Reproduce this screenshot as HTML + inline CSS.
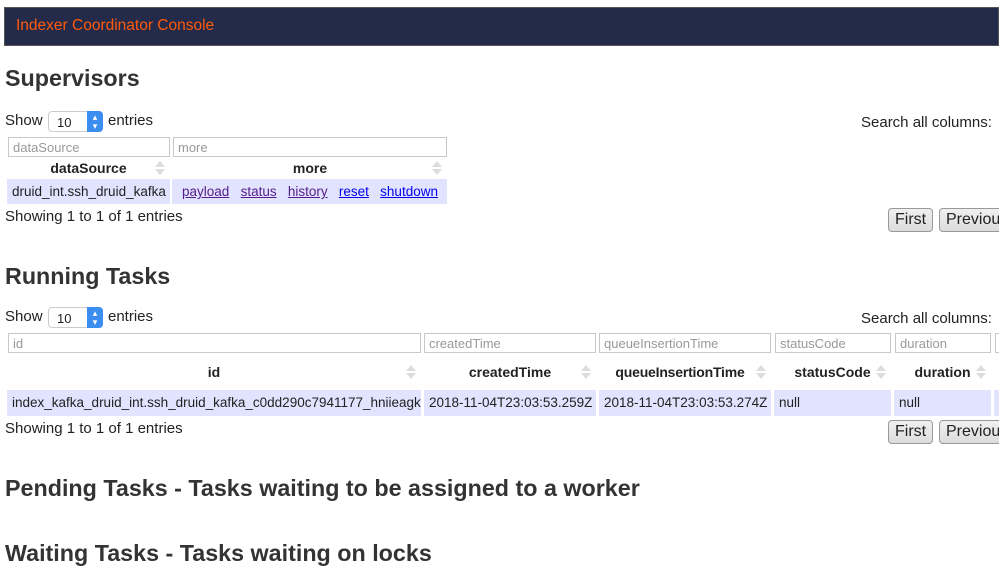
<!DOCTYPE html>
<html><head><meta charset="utf-8"><style>
*{box-sizing:border-box;margin:0;padding:0}
body{width:999px;height:580px;overflow:hidden;background:#fff;font-family:"Liberation Sans",Arial,sans-serif;color:#222;position:relative}
.a{position:absolute;white-space:nowrap}
.hdr{left:4px;top:7px;width:995px;height:39px;background:#232a4a;border:1px solid #555}
.ttl{left:16px;top:17px;font-size:15.5px;color:#ff5a0a}
h2{position:absolute;font-size:23.3px;font-weight:bold;color:#333;white-space:nowrap}
.t{font-size:15px}
.sel{width:55px;height:21px;border:1px solid #ccc;border-radius:4px;background:#fff;font-size:13px;padding:3px 0 0 8px}
.sel i{position:absolute;right:-1px;top:-1px;width:16px;height:21px;background:#3b8ef0;border-radius:0 4px 4px 0;color:#fff;font-style:normal;font-size:9px;text-align:center;line-height:9px;padding-top:2px}
.inp{height:20px;border:1px solid #c8c8c8;font-size:13px;color:#999;padding:2px 4px;background:#fff}
.th{font-size:14px;font-weight:bold;text-align:center}
.ar{position:absolute;width:0;height:0;border-left:5px solid transparent;border-right:5px solid transparent}
.up{border-bottom:6px solid #ddd}.dn{border-top:6px solid #ddd}
.cell{background:#e2e4ff;font-size:13.5px;padding:5px 5px 0;overflow:hidden}
.btn{height:24px;border:1px solid #999;border-radius:4px;background:linear-gradient(#f0f0f0,#dcdcdc);font-size:16px;padding:2px 6px}
a{color:#0000ee;text-decoration:underline}a.v{color:#551a8b}
</style></head><body>
<div class="a hdr"></div>
<div class="a ttl">Indexer Coordinator Console</div>
<h2 style="left:5px;top:65px">Supervisors</h2>
<div class="a t" style="left:5px;top:112px">Show</div>
<div class="a sel" style="left:48px;top:111px">10<i>▴<br>▾</i></div>
<div class="a t" style="left:108px;top:112px">entries</div>
<div class="a t" style="left:861px;top:114px">Search all columns:</div>
<div class="a inp" style="left:8px;top:137px;width:162px">dataSource</div>
<div class="a inp" style="left:173px;top:137px;width:274px">more</div>
<div class="a th" style="left:7px;top:160px;width:163px">dataSource</div>
<div class="a th" style="left:173px;top:160px;width:274px">more</div>
<div class="ar up" style="left:155px;top:161px"></div><div class="ar dn" style="left:155px;top:169px"></div>
<div class="ar up" style="left:432px;top:161px"></div><div class="ar dn" style="left:432px;top:169px"></div>
<div class="a cell" style="left:7px;top:179px;width:163px;height:25px;padding-left:5px">druid_int.ssh_druid_kafka</div>
<div class="a cell" style="left:172px;top:179px;width:275px;height:25px;padding-left:10px"><a class="v">payload</a>&nbsp;&nbsp; <a class="v">status</a>&nbsp;&nbsp; <a class="v">history</a>&nbsp;&nbsp; <a>reset</a>&nbsp;&nbsp; <a>shutdown</a></div>
<div class="a t" style="left:5px;top:208px">Showing 1 to 1 of 1 entries</div>
<div class="a btn" style="left:888px;top:208px">First</div>
<div class="a btn" style="left:939px;top:208px;width:80px">Previous</div>

<h2 style="left:5px;top:263px">Running Tasks</h2>
<div class="a t" style="left:5px;top:308px">Show</div>
<div class="a sel" style="left:48px;top:307px">10<i>▴<br>▾</i></div>
<div class="a t" style="left:108px;top:308px">entries</div>
<div class="a t" style="left:861px;top:310px">Search all columns:</div>
<div class="a inp" style="left:8px;top:333px;width:413px">id</div>
<div class="a inp" style="left:424px;top:333px;width:172px">createdTime</div>
<div class="a inp" style="left:599px;top:333px;width:172px">queueInsertionTime</div>
<div class="a inp" style="left:775px;top:333px;width:116px">statusCode</div>
<div class="a inp" style="left:895px;top:333px;width:96px">duration</div>
<div class="a inp" style="left:995px;top:333px;width:30px"></div>
<div class="a th" style="left:7px;top:364px;width:414px">id</div>
<div class="a th" style="left:424px;top:364px;width:172px">createdTime</div>
<div class="a th" style="left:599px;top:364px;width:162px;letter-spacing:-0.2px">queueInsertionTime</div>
<div class="a th" style="left:774px;top:364px;width:117px">statusCode</div>
<div class="a th" style="left:894px;top:364px;width:97px">duration</div>
<div class="ar up" style="left:406px;top:365px"></div><div class="ar dn" style="left:406px;top:373px"></div>
<div class="ar up" style="left:581px;top:365px"></div><div class="ar dn" style="left:581px;top:373px"></div>
<div class="ar up" style="left:756px;top:365px"></div><div class="ar dn" style="left:756px;top:373px"></div>
<div class="ar up" style="left:876px;top:365px"></div><div class="ar dn" style="left:876px;top:373px"></div>
<div class="ar up" style="left:976px;top:365px"></div><div class="ar dn" style="left:976px;top:373px"></div>
<div class="a cell" style="left:7px;top:390px;width:414px;height:26px">index_kafka_druid_int.ssh_druid_kafka_c0dd290c7941177_hniieagk</div>
<div class="a cell" style="left:424px;top:390px;width:172px;height:26px">2018-11-04T23:03:53.259Z</div>
<div class="a cell" style="left:599px;top:390px;width:172px;height:26px">2018-11-04T23:03:53.274Z</div>
<div class="a cell" style="left:774px;top:390px;width:117px;height:26px">null</div>
<div class="a cell" style="left:894px;top:390px;width:97px;height:26px">null</div>
<div class="a cell" style="left:994px;top:390px;width:10px;height:26px"></div>
<div class="a t" style="left:5px;top:420px">Showing 1 to 1 of 1 entries</div>
<div class="a btn" style="left:888px;top:420px">First</div>
<div class="a btn" style="left:939px;top:420px;width:80px">Previous</div>

<h2 style="left:5px;top:475px">Pending Tasks - Tasks waiting to be assigned to a worker</h2>
<h2 style="left:5px;top:540px">Waiting Tasks - Tasks waiting on locks</h2>
</body></html>
